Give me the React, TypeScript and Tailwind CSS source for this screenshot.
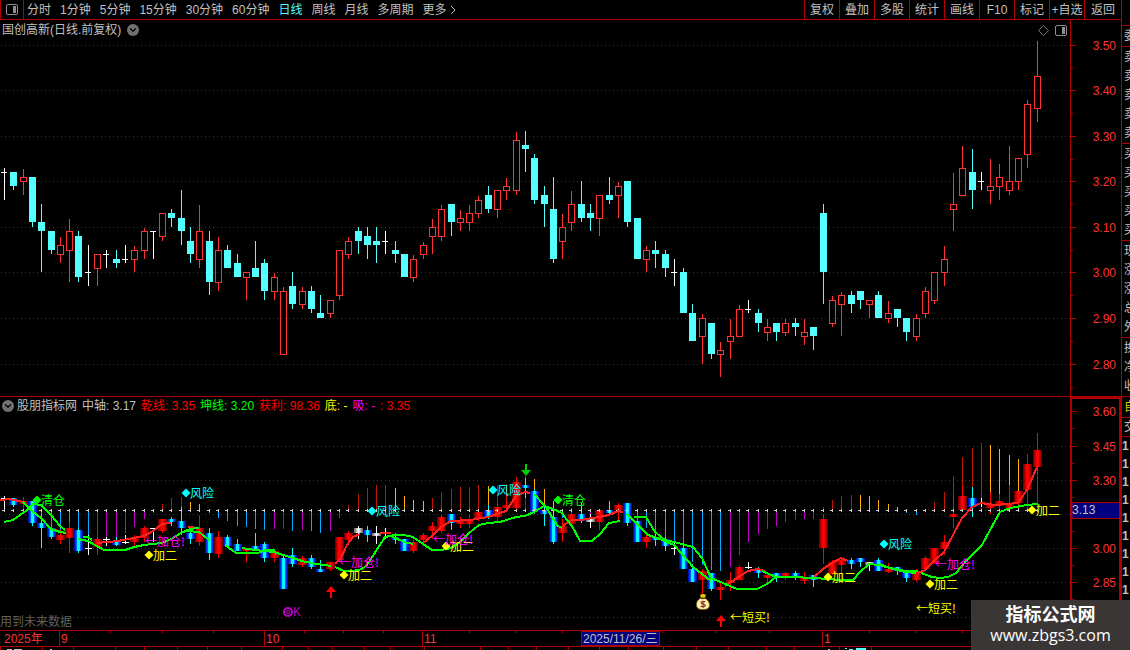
import { ChevronDown } from 'lucide-react'

type Kind = 'u' | 'd' | 'w'
type Bar = [Kind, number, number, number, number]
type Point = [number, number]

const RED = '#b00000'

const periods = ['分时', '1分钟', '5分钟', '15分钟', '30分钟', '60分钟', '日线', '周线', '月线', '多周期', '更多']
const tools = ['复权', '叠加', '多股', '统计', '画线', 'F10', '标记', '+自选', '返回']

// kind, high, body top, body bottom, low (rows of the price panel)
const bars: Bar[] = [
  ['w', 168, 172, 173, 200], ['d', 172, 172, 186, 190], ['u', 169, 177, 182, 195], ['d', 177, 177, 222, 227],
  ['d', 204, 222, 231, 272], ['d', 231, 231, 250, 254], ['u', 237, 245, 255, 263], ['u', 219, 231, 251, 282],
  ['d', 231, 236, 277, 282], ['w', 245, 272, 273, 286], ['u', 254, 254, 269, 286], ['w', 250, 254, 255, 268],
  ['d', 250, 259, 263, 268], ['w', 245, 259, 260, 263], ['u', 246, 250, 260, 272], ['u', 228, 231, 251, 259],
  ['w', 231, 231, 232, 259], ['u', 213, 213, 237, 241], ['d', 209, 213, 218, 227], ['d', 190, 218, 231, 245],
  ['d', 227, 241, 254, 263], ['u', 205, 231, 260, 268], ['d', 231, 241, 282, 295], ['u', 237, 250, 283, 291],
  ['d', 245, 250, 268, 268], ['d', 254, 263, 277, 277], ['u', 272, 272, 278, 300], ['d', 241, 268, 277, 277],
  ['d', 259, 263, 291, 300], ['u', 273, 277, 292, 300], ['u', 287, 291, 355, 355], ['d', 272, 286, 304, 309],
  ['u', 287, 291, 305, 309], ['d', 286, 291, 309, 313], ['d', 295, 313, 318, 318], ['u', 300, 300, 314, 318],
  ['u', 250, 250, 296, 300], ['u', 237, 241, 255, 259], ['d', 227, 231, 241, 254], ['d', 227, 236, 245, 259],
  ['d', 227, 241, 245, 263], ['w', 231, 241, 242, 254], ['d', 241, 250, 254, 263], ['d', 254, 254, 277, 277],
  ['u', 255, 259, 278, 282], ['u', 242, 245, 255, 259], ['u', 219, 227, 237, 254], ['u', 205, 209, 237, 241],
  ['d', 204, 204, 222, 236], ['u', 210, 218, 223, 231], ['u', 205, 213, 223, 231], ['u', 196, 200, 214, 218],
  ['d', 186, 195, 209, 213], ['u', 190, 190, 210, 218], ['u', 178, 186, 191, 200], ['u', 132, 140, 191, 195],
  ['d', 131, 145, 149, 172], ['d', 154, 158, 200, 204], ['d', 186, 195, 204, 227], ['d', 177, 209, 259, 263],
  ['u', 214, 227, 242, 259], ['u', 191, 204, 223, 231], ['d', 181, 204, 218, 222], ['d', 204, 213, 218, 231],
  ['u', 195, 195, 219, 236], ['d', 177, 195, 200, 204], ['u', 182, 186, 196, 218], ['d', 181, 181, 222, 227],
  ['d', 218, 218, 259, 259], ['u', 246, 250, 260, 272], ['d', 241, 250, 254, 268], ['d', 250, 254, 268, 277],
  ['w', 259, 272, 273, 286], ['d', 268, 272, 313, 313], ['d', 304, 313, 341, 341], ['u', 314, 318, 337, 364],
  ['d', 323, 323, 354, 359], ['u', 342, 350, 355, 377], ['u', 319, 336, 342, 359], ['u', 305, 309, 337, 337],
  ['w', 300, 309, 310, 313], ['d', 309, 313, 323, 332], ['u', 319, 327, 333, 341], ['d', 323, 323, 332, 341],
  ['u', 319, 323, 333, 336], ['d', 318, 323, 327, 336], ['u', 319, 332, 337, 345], ['d', 327, 327, 336, 350],
  ['d', 204, 213, 272, 304], ['u', 296, 300, 324, 327], ['u', 292, 295, 305, 336], ['d', 291, 295, 304, 313],
  ['d', 291, 291, 300, 309], ['u', 300, 300, 305, 318], ['d', 291, 295, 318, 318], ['u', 301, 313, 319, 323],
  ['d', 309, 309, 318, 327], ['d', 318, 318, 332, 341], ['u', 314, 318, 337, 341], ['u', 287, 291, 314, 318],
  ['u', 272, 272, 301, 304], ['u', 246, 259, 273, 286], ['u', 173, 204, 210, 231], ['u', 146, 168, 196, 196],
  ['d', 149, 172, 190, 209], ['w', 172, 181, 182, 190], ['u', 159, 186, 191, 204], ['u', 164, 177, 187, 200],
  ['u', 146, 181, 191, 195], ['u', 158, 158, 182, 190], ['u', 100, 104, 155, 168], ['u', 41, 76, 109, 122],
]

// bars that the indicator paints in another colour than the price panel
const repaint: Record<number, Kind> = { 30: 'd', 38: 'w', 40: 'w', 63: 'w', 88: 'u', 93: 'w' }

const B = '#00a8ff'
const M = '#c000c0'
const R = '#c01800'
const O = '#ffb000'
// bar index, end row, colour
const sticks: [number, number, string][] = [
  [4, 520, B], [5, 528, B], [6, 532, B], [7, 525, B], [8, 530, B], [9, 537, B],
  [10, 539, M], [11, 539, M], [12, 540, M], [13, 533, M], [14, 527, M], [15, 519, M], [16, 513, M],
  [17, 504, R], [18, 498, R], [19, 497, R], [20, 502, O], [21, 504, O],
  [22, 513, B], [23, 518, B], [24, 521, B], [25, 526, B], [26, 527, B], [27, 529, B], [28, 530, B],
  [29, 529, M], [30, 529, M], [31, 531, B], [32, 530, M], [33, 531, B], [34, 533, B], [35, 531, M], [36, 518, M],
  [37, 505, R], [38, 494, R], [39, 488, R], [40, 485, R], [41, 485, R], [42, 488, O], [43, 496, O], [44, 500, O],
  [45, 501, O], [46, 498, R], [47, 492, R], [48, 489, R], [49, 487, R], [50, 487, R], [51, 485, R], [52, 486, O],
  [53, 486, R], [54, 484, R], [55, 477, R], [56, 476, R], [57, 479, O], [58, 489, O], [59, 505, O],
  [60, 518, B], [62, 516, B], [63, 515, M], [68, 523, B], [69, 528, B], [70, 537, B], [71, 540, B], [72, 542, B],
  [73, 548, B], [74, 562, B], [75, 565, B], [76, 570, B], [77, 571, B], [78, 567, M], [79, 555, M], [80, 542, M],
  [81, 534, M], [82, 529, M], [83, 526, M], [84, 522, M], [85, 520, M], [86, 519, M], [87, 519, M],
  [88, 507, R], [89, 500, R], [90, 496, R], [91, 495, R], [92, 495, O], [93, 496, O], [94, 500, O], [95, 504, O],
  [96, 507, O], [97, 513, B], [98, 515, B], [100, 502, R], [101, 492, R], [102, 476, R], [103, 457, R],
  [104, 448, R], [105, 443, R], [106, 445, O], [107, 449, O], [108, 455, O], [109, 459, O], [110, 454, R], [111, 470, R],
]

const greenLines: Point[][] = [
  [[4, 522], [13, 520], [27, 510], [33, 504], [41, 505], [51, 515], [60, 526], [65, 530]],
  [[23, 502], [32, 511], [41, 518], [51, 529], [60, 532], [66, 533]],
  [[78, 539], [88, 541], [95, 545], [104, 550], [125, 550], [134, 547], [144, 545], [162, 543], [171, 539], [181, 533], [190, 529], [199, 528]],
  [[83, 537], [88, 537], [92, 540]],
  [[186, 531], [199, 532], [209, 540]],
  [[225, 545], [236, 553], [258, 553], [265, 550], [275, 550]],
  [[242, 548], [255, 550], [274, 552], [283, 555], [290, 557], [302, 561], [311, 563], [331, 566]],
  [[335, 567], [344, 571], [353, 571], [362, 569], [367, 565], [376, 551], [385, 537], [395, 535], [404, 535], [413, 537], [423, 544], [432, 550], [441, 550], [451, 548], [460, 542], [469, 533], [479, 525], [488, 523], [500, 522], [516, 517], [525, 516], [534, 512], [544, 506], [553, 509], [562, 513], [567, 520], [572, 526], [580, 541], [592, 541], [600, 534], [609, 523], [620, 521]],
  [[391, 536], [404, 542], [413, 544]],
  [[534, 494], [544, 505], [548, 510], [553, 519], [558, 526], [562, 528]],
  [[627, 514], [633, 520], [648, 535], [660, 539], [674, 545], [683, 555], [693, 567], [702, 574], [711, 581]],
  [[634, 517], [646, 517], [655, 532], [665, 540], [674, 542], [693, 547], [702, 558], [711, 578], [723, 583], [737, 589], [757, 589], [767, 584], [776, 577]],
  [[762, 571], [776, 577], [790, 577], [815, 578], [840, 580], [853, 580], [860, 572], [869, 564], [879, 565], [893, 569], [905, 572], [916, 573]],
  [[880, 564], [890, 568], [905, 571], [918, 571]],
  [[921, 573], [932, 577], [940, 578], [948, 577], [956, 573], [967, 560], [982, 545], [990, 530], [1000, 512], [1010, 508], [1027, 505], [1038, 504]],
]

const redLines: Point[][] = [
  [[0, 500], [10, 499], [23, 502]],
  [[55, 530], [66, 533]],
  [[97, 543], [118, 541], [144, 536], [153, 531], [162, 524], [171, 523]],
  [[188, 527], [199, 528]],
  [[335, 564], [341, 558], [347, 545], [353, 537], [360, 534]],
  [[380, 533], [391, 533]],
  [[423, 543], [432, 536], [441, 527], [451, 521], [470, 520], [488, 517], [506, 511], [516, 496], [525, 492], [530, 493]],
  [[562, 526], [572, 520], [580, 520], [599, 517], [609, 515], [618, 511], [623, 512]],
  [[725, 586], [737, 578], [748, 571], [758, 569], [765, 571]],
  [[814, 577], [823, 569], [832, 563], [841, 558], [848, 561]],
  [[918, 573], [925, 570], [934, 561], [944, 552], [953, 535], [962, 518], [972, 507], [981, 503], [995, 505], [1018, 503], [1027, 490], [1037, 467]],
]

const signals: [number, number, string, string][] = [
  [37, 500, '清仓', '#00ff00'], [558, 500, '清仓', '#00ff00'],
  [186, 493, '风险', '#00ffff'], [372, 511, '风险', '#00ffff'], [493, 490, '风险', '#00ffff'], [884, 544, '风险', '#00ffff'],
  [149, 555, '加二', '#ffff00'], [344, 575, '加二', '#ffff00'], [446, 546, '加二', '#ffff00'],
  [828, 577, '加二', '#ffff00'], [930, 584, '加二', '#ffff00'], [1032, 510, '加二', '#ffff00'],
]

const notes: [number, number, string, string][] = [
  [145, 541, '←加仓!', '#ff00ff'], [339, 562, '←加仓!', '#ff00ff'], [433, 539, '←加仓!', '#ff00ff'], [935, 564, '←加仓!', '#ff00ff'],
  [730, 617, '←短买!', '#ffff00'], [916, 608, '←短买!', '#ffff00'],
]

const priceMarks: [number, string][] = [
  [45, '3.50'], [90, '3.40'], [136, '3.30'], [181, '3.20'], [227, '3.10'], [272, '3.00'], [318, '2.90'], [364, '2.80'],
]
const indicatorMarks: [number, string][] = [
  [411, '3.60'], [446, '3.45'], [480, '3.30'], [514, ''], [548, '3.00'], [582, '2.85'], [617, ''],
]

const quoteGroups = ['委', '卖卖卖卖卖', '买买买买买', '现涨涨总外', '换净收']

const barX = (i: number) => Math.floor(4.5 + i * 9.303)
const halfY = (y: number) => Math.round(548.3 + (y - 272.5) * 0.499)

function Grid({ rows }: { rows: number[] }) {
  return (
    <g stroke={RED} strokeDasharray="1 3">
      {rows.map((y) => (
        <line key={y} x1="1" x2="100%" y1={y + 0.5} y2={y + 0.5} />
      ))}
    </g>
  )
}

function PriceBar({ bar, x }: { bar: Bar; x: number }) {
  const [kind, high, top, bottom, low] = bar
  if (kind === 'w') {
    return (
      <g fill="#fff">
        <rect x={x} y={high} width="1" height={low - high} />
        <rect x={x - 3} y={top} width="6" height="1" />
      </g>
    )
  }
  if (kind === 'd') {
    return (
      <g fill="#54ffff">
        <rect x={x} y={high} width="1" height={low - high} />
        <rect x={x - 3} y={top} width="7" height={bottom - top} />
      </g>
    )
  }
  return (
    <g fill="#ff3232">
      <rect x={x} y={high} width="1" height={top - high} />
      <rect x={x} y={bottom} width="1" height={low - bottom} />
      <rect x={x - 2.5} y={top + 0.5} width="6" height={bottom - top - 1} fill="none" stroke="#ff3232" />
    </g>
  )
}

function SignalBar({ bar, x, kind }: { bar: Bar; x: number; kind: Kind }) {
  const [, high, top, bottom, low] = bar
  const wick = { u: '#ff0000', d: '#00ffff', w: '#ffffff' }[kind]
  const body = { u: 'url(#rise)', d: 'url(#fall)', w: 'url(#flat)' }[kind]
  const thin = bar[0] === 'w'
  const y = halfY(top)
  return (
    <g>
      <rect x={x} y={halfY(high)} width="1" height={Math.max(1, halfY(low) - halfY(high))} fill={wick} />
      {thin ? (
        <rect x={x - 3} y={y} width="7" height="1" fill={wick} />
      ) : (
        <rect x={x - 4} y={y} width="9" height={Math.max(3, halfY(bottom) - y)} fill={body} />
      )}
    </g>
  )
}

function Trend({ lines, color }: { lines: Point[][]; color: string }) {
  return (
    <g fill="none" stroke={color} strokeWidth="2" shapeRendering="crispEdges">
      {lines.map((pts, i) => (
        <polyline key={i} points={pts.map((p) => p.join(',')).join(' ')} />
      ))}
    </g>
  )
}

function MoneyBag() {
  return (
    <g transform="translate(696 594)">
      <path d="M4 1 Q7 -1 10 1 L8.500 5 H5.500 Z" fill="#e8c800" />
      <path d="M5 4 C1 6 0 9 0.500 12 C1 15 4 15.500 7 15.500 C10 15.500 13 15 13.500 12 C14 9 12 6 9 4 Z" fill="#fff0a0" stroke="#6b4a10" strokeWidth="0.800" />
      <path d="M5 4.500 H9" stroke="#5a3010" strokeWidth="1.200" />
      <path d="M9.200 8.200 C8 7 5 7.300 5 8.800 C5 10.500 9.400 9.600 9.300 11.500 C9.200 13.200 6 13.200 4.700 12 M7 6.800 V13.800" fill="none" stroke="#8a3030" strokeWidth="1.200" />
    </g>
  )
}

function PriceChart() {
  return (
    <svg className="block w-full h-[356px]" aria-label="K线">
      <g transform="translate(0 -40)" shapeRendering="crispEdges">
        <Grid rows={priceMarks.map(([y]) => y)} />
        {bars.map((bar, i) => (
          <PriceBar key={i} bar={bar} x={barX(i)} />
        ))}
      </g>
    </svg>
  )
}

function IndicatorChart() {
  return (
    <svg className="block w-full h-[216px]" aria-label="指标">
      <defs>
        <linearGradient id="fall">
          <stop offset="0" stopColor="#0000a0" />
          <stop offset="0.25" stopColor="#0040ff" />
          <stop offset="0.4" stopColor="#00ffff" />
          <stop offset="0.6" stopColor="#00ffff" />
          <stop offset="0.75" stopColor="#0040ff" />
          <stop offset="1" stopColor="#0000a0" />
        </linearGradient>
        <linearGradient id="rise">
          <stop offset="0" stopColor="#600000" />
          <stop offset="0.4" stopColor="#ff0000" />
          <stop offset="0.6" stopColor="#ff0000" />
          <stop offset="1" stopColor="#600000" />
        </linearGradient>
        <linearGradient id="flat">
          <stop offset="0" stopColor="#606060" />
          <stop offset="0.5" stopColor="#ffffff" />
          <stop offset="1" stopColor="#606060" />
        </linearGradient>
      </defs>
      <g transform="translate(0 -414)">
        <g shapeRendering="crispEdges">
          <Grid rows={[446, 480, 514, 548, 582, 617]} />
          {sticks.map(([i, y, color]) => (
            <rect key={i} x={barX(i)} y={Math.min(y, 511)} width="1" height={Math.abs(511 - y)} fill={color} />
          ))}
          {bars.map((bar, i) => (
            <SignalBar key={i} bar={bar} x={barX(i)} kind={repaint[i] ?? bar[0]} />
          ))}
          {bars.map((_, i) => (
            <path key={i} d={`M${barX(i) - 2} 510 h3 v1 h-3 z M${barX(i)} 509 h1 v3 h-1 z`} fill="#d0d0d0" />
          ))}
        </g>
        <Trend lines={redLines} color="#ff2020" />
        <Trend lines={greenLines} color="#00ff00" />
        <path d="M525 464 h2 v6 h4 l-5 6 l-5 -6 h4 z" fill="#00d000" />
        <path d="M331 586 l5 6 h-4 v6 h-2 v-6 h-4 z" fill="#ff0000" />
        <path d="M721 615 l5 6 h-4 v6 h-2 v-6 h-4 z" fill="#ff0000" />
        <MoneyBag />
        <g fill="none" stroke="#c000c0">
          <circle cx="288" cy="612" r="4" strokeWidth="2" />
          <circle cx="288" cy="612" r="1.500" />
        </g>
        <text x="293" y="616" fontSize="12" fill="#c000c0">K</text>
        {signals.map(([x, y, label, color]) => (
          <g key={`${x}-${y}`} fill={color}>
            <path d={`M${x} ${y - 4.5} l4.500 4.500 l-4.500 4.500 l-4.500 -4.500 z`} />
            <text x={x + 4} y={y + 5} fontSize="12">{label}</text>
          </g>
        ))}
        <g fontSize="12" className="font-['Noto_Sans_CJK_SC',sans-serif]">
          {notes.map(([x, y, label, color]) => (
            <text key={`${x}-${y}`} x={x} y={y + 5} fill={color}>{label}</text>
          ))}
        </g>
      </g>
    </svg>
  )
}

type AxisProps = { marks: [number, string][]; minor: number; top: number; right: number }

function AxisMarks({ marks, minor, top, right }: AxisProps) {
  return (
    <g transform={`translate(0 ${-top})`}>
      {marks.map(([y, label]) => (
        <g key={y}>
          <rect x="0" y={y} width="5" height="1" fill={RED} />
          <rect x="0" y={y + minor} width="2" height="1" fill={RED} />
          {label && (
            <text x={right} y={y + 5} fontSize="12" textAnchor="end" fill="#ff3232">{label}</text>
          )}
        </g>
      ))}
    </g>
  )
}

function PanelIcon() {
  return (
    <svg width="12" height="11" className="block" aria-hidden="true">
      <rect x="0.500" y="0.500" width="11" height="10" rx="1.500" fill="none" stroke="#909090" />
      <rect x="7" y="2" width="3" height="7" fill="#909090" />
    </svg>
  )
}

function Toggle({ label }: { label: string }) {
  return (
    <button aria-label={label} className="flex size-3 items-center justify-center rounded-full bg-[#707070] text-black">
      <ChevronDown size={10} strokeWidth={3} />
    </button>
  )
}

function Toolbar() {
  return (
    <header className="flex h-5 border-b border-[#b00000] text-[#c0c0c0]">
      <button aria-label="侧栏" className="flex w-6 items-center justify-center border-x border-[#b00000]">
        <PanelIcon />
      </button>
      <nav className="flex flex-1 items-center gap-[9px] pl-[3px]">
        {periods.map((p) => (
          <button key={p} className={p === '日线' ? 'text-[#54ffff]' : ''}>{p}</button>
        ))}
        <svg width="6" height="10" className="-ml-1.5" aria-hidden="true">
          <path d="M1 1 L5 5 L1 9" fill="none" stroke="#c0c0c0" />
        </svg>
      </nav>
      <div className="flex">
        {tools.map((t) => (
          <button key={t} className="w-[35px] whitespace-nowrap border-l border-[#b00000] last:w-[37px]">{t}</button>
        ))}
      </div>
    </header>
  )
}

function Timeline() {
  const ticks = [110, 162, 213, 304, 343, 383, 469, 515, 562, 662, 715, 769, 869, 915, 962]
  const months: [number, string][] = [[59, '9'], [264, '10'], [422, '11'], [822, '1']]
  return (
    <svg className="block h-[17px] w-full border-y border-[#b00000]" aria-label="日期">
      <text x="4" y="12" fontSize="12" fill="#ff3232">2025年</text>
      {ticks.map((x) => (
        <rect key={x} x={x} y="0" width="1" height="2" fill={RED} />
      ))}
      {months.map(([x, label]) => (
        <g key={x}>
          <rect x={x} y="0" width="1" height="15" fill={RED} />
          <text x={x + 2} y="12" fontSize="12" fill="#ff3232">{label}</text>
        </g>
      ))}
      <rect x="581.500" y="0.500" width="78" height="14" fill="#000080" stroke={RED} />
      <text x="583" y="12" fontSize="12" fill="#c0c0c0">2025/11/26/三</text>
    </svg>
  )
}

function TabStrip() {
  const edges = [0, 42, 73, 115, 144, 177, 207, 241, 282, 308, 332, 364, 390, 424, 480, 508, 536, 568, 599, 628, 663, 696, 728, 766, 794, 839, 871]
  return (
    <svg className="block h-[3px] w-full" aria-hidden="true">
      {edges.map((x) => (
        <rect key={x} x={x} y="0" width="1" height="3" fill={RED} />
      ))}
      <path d="M7 2.500 h5 M14 2.500 h8 M50 2.500 h2 M828 2.500 h2" stroke="#c0c0c0" />
      <path d="M845 1.500 h2 M849 2.500 h4 M856 1.500 h10 M856 2.500 h10" stroke="#54ffff" />
    </svg>
  )
}

function QuoteStrip() {
  return (
    <aside className="w-[9px] shrink-0 overflow-hidden border-l border-[#b00000] pt-[25px] text-[#c0c0c0]">
      <div className="border-t border-[#b00000]">
        {quoteGroups.map((group) => (
          <div key={group} className="border-b border-[#b00000] pl-0.5 pt-px">
            {[...group].map((c, i) => (
              <div key={i} className="h-[19px] w-3 leading-[19px]">{c}</div>
            ))}
          </div>
        ))}
        <div className="h-[21px] w-4 border-b border-[#b00000] pl-0.5 leading-5 text-[#d0d000]">自</div>
        <div className="h-[19px] w-4 border-b border-[#b00000] pl-0.5 leading-[18px]">交</div>
        {Array.from({ length: 11 }, (_, i) => (
          <div key={i} className="h-[18px] font-bold leading-[18px]">1</div>
        ))}
      </div>
    </aside>
  )
}

export default function App() {
  return (
    <div className="relative flex h-screen overflow-hidden bg-black font-['Liberation_Sans','Noto_Sans_CJK_SC',sans-serif] text-[12px] leading-4">
      <div className="min-w-0 flex-1">
        <Toolbar />
        <section className="flex">
          <div className="min-w-0 flex-1">
            <div className="flex h-5 items-center gap-1.5 pl-0.5 pr-[3px] text-[#c0c0c0]">
              <h1>国创高新(日线.前复权)</h1>
              <Toggle label="展开" />
              <span className="flex-1" />
              <svg width="11" height="11" aria-hidden="true">
                <path d="M5.500 0.500 L10.500 5.500 L5.500 10.500 L0.500 5.500 Z" fill="none" stroke="#707070" />
              </svg>
              <PanelIcon />
            </div>
            <PriceChart />
          </div>
          <svg className="h-[376px] w-[51px] shrink-0 border-l border-[#b00000]" aria-label="价格">
            <AxisMarks marks={priceMarks} minor={23} top={20} right={45} />
          </svg>
        </section>
        <section className="flex border-t border-[#b00000]">
          <div className="min-w-0 flex-1">
            <div className="flex h-[17px] items-center gap-[5px] whitespace-nowrap pl-0.5 text-[#c0c0c0]">
              <Toggle label="指标菜单" />
              <span className="-ml-0.5">股朋指标网</span>
              <span>中轴: 3.17</span>
              <span className="text-[#ff0000]">乾线: 3.35</span>
              <span className="text-[#00ff00]">坤线: 3.20</span>
              <span className="text-[#ff0000]">获利: 98.36</span>
              <span className="text-[#ffff00]">底: -</span>
              <span className="text-[#ff00ff]">吸: -</span>
              <span className="text-[#ff0000]">: 3.35</span>
            </div>
            <div className="relative">
              <IndicatorChart />
              <p className="absolute bottom-0 left-0 bg-black text-[#606060]">用到未来数据</p>
            </div>
          </div>
          <svg className="h-[233px] w-[51px] shrink-0 border-2 border-b-0 border-[#b00000]" aria-label="指标值">
            <AxisMarks marks={indicatorMarks} minor={17} top={399} right={44} />
            <rect x="0" y="103.500" width="48" height="16" fill="#000080" stroke={RED} />
            <text x="0" y="115" fontSize="12" fill="#c0c0c0">3.13</text>
          </svg>
        </section>
        <Timeline />
        <TabStrip />
      </div>
      <QuoteStrip />
      <div className="absolute bottom-0 right-0 flex h-[50px] w-[159px] flex-col items-center justify-center bg-[#3b3636] text-white">
        <strong className="text-[18px] leading-5">指标公式网</strong>
        <a href="#" className="font-['Open_Sans',sans-serif] text-[16px] leading-5">www.zbgs3.com</a>
      </div>
    </div>
  )
}
